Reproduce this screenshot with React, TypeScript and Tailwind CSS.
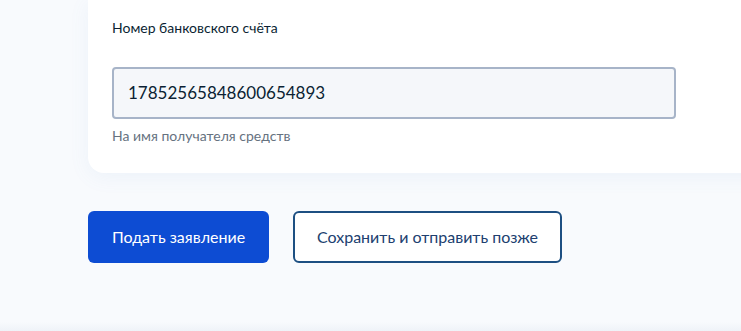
import React from 'react';

export default function App() {
  return (
    <div className="min-h-[331px] w-[741px] overflow-hidden bg-[#f8fafd] font-['Lato','Noto_Sans',sans-serif] flex flex-col">
      <div className="flex-1 pl-[88px]">
        {/* Form card */}
        <div className="bg-white rounded-bl-[16px] shadow-[0_4px_20px_rgba(102,150,200,0.08)] pl-6 pt-[18px] pb-[28px] -mr-10">
          <p className="text-[14px] leading-[20px] text-[#0b1f33]">Номер банковского счёта</p>
          <div className="mt-[29px] w-[564px] h-[52px] rounded-[4px] border-2 border-[#a7b4c8] bg-[#f5f7fa] flex items-center px-[14px]">
            <span className="text-[17px] text-[#0b1f33]">17852565848600654893</span>
          </div>
          <p className="mt-[8px] text-[14px] leading-[18px] text-[#66727f]">На имя получателя средств</p>
        </div>

        {/* Actions */}
        <div className="flex gap-6 mt-[38px]">
          <button className="w-[181px] h-[52px] rounded-[6px] bg-[#0d4cd3] text-white text-[16px]">
            Подать заявление
          </button>
          <button className="w-[269px] h-[52px] rounded-[6px] border-2 border-[#1d4f82] bg-white text-[#20406f] text-[16px]">
            Сохранить и отправить позже
          </button>
        </div>
      </div>
      <div className="h-[10px] mt-[59px] bg-gradient-to-b from-[#f8fafd] to-[#eef2f8]" />
    </div>
  );
}
